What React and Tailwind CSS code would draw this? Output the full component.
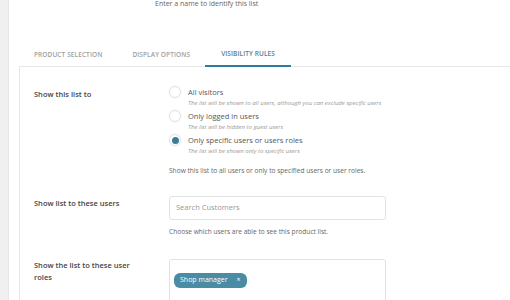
import React from "react";

function Radio({ checked, title, sub }) {
  return (
    <div className="flex items-start mb-[3px]">
      <div className="w-[12px] h-[12px] rounded-full border border-[#e3e3e3] bg-white shadow-[0_0_2px_rgba(0,0,0,0.08)] flex items-center justify-center mt-[-1px] shrink-0">
        {checked && <div className="w-[7px] h-[7px] rounded-full bg-[#3c7b97]" />}
      </div>
      <div className="ml-[7px] flex flex-col">
        <span className="text-[7.5px] leading-[11px] text-[#555]">{title}</span>
        <span className="text-[6px] leading-[10px] italic text-[#9a9a9a]">{sub}</span>
      </div>
    </div>
  );
}

export default function App() {
  return (
    <div
      className="w-[510px] h-[300px] overflow-hidden flex bg-white"
      style={{ fontFamily: '"Open Sans", "Noto Sans", sans-serif' }}
    >
      <div className="w-[9px] h-full bg-[#f0f0f0] border-r border-[#e6e6e6] shrink-0" />
      <div className="flex-1 flex flex-col pl-[10px] min-h-0">
        <div className="h-[40px] shrink-0 pl-[136px] text-[7px] leading-[7px] text-[#666]">
          Enter a name to identify this list
        </div>
        <div className="flex h-[27px] shrink-0 items-stretch">
          <div className="px-[15px] pt-[3px] flex items-center text-[6.5px] font-semibold tracking-[0.1px] text-[#a0a0a0]">PRODUCT SELECTION</div>
          <div className="px-[15px] pt-[3px] flex items-center text-[6.5px] font-semibold tracking-[0.1px] text-[#a0a0a0]">DISPLAY OPTIONS</div>
          <div className="px-[16px] pt-[3px] flex items-center text-[6.5px] font-semibold tracking-[0.1px] text-[#5d7b8e] border-b-[2px] border-[#2d7d9e] relative z-10">VISIBILITY RULES</div>
        </div>
        <div className="shrink-0 border-l border-t border-[#e6e6e6] mt-[-1px] pl-[14px] pt-[20px] pb-[20px]">
          <div className="flex">
            <div className="w-[135px] text-[7.5px] leading-[12px] font-semibold text-[#444] mt-[1px]">Show this list to</div>
            <div className="flex flex-col">
              <Radio title="All visitors" sub="The list will be shown to all users, although you can exclude specific users" />
              <Radio title="Only logged in users" sub="The list will be hidden to guest users" />
              <Radio checked title="Only specific users or users roles" sub="The list will be shown only to specific users" />
              <div className="mt-[7px] text-[6.6px] leading-[10px] text-[#666]">Show this list to all users or only to specified users or user roles.</div>
            </div>
          </div>
          <div className="flex mt-[20px]">
            <div className="w-[135px] text-[7.5px] leading-[12px] font-semibold text-[#444] pt-[1px]">Show list to these users</div>
            <div className="flex flex-col">
              <div className="w-[217px] h-[24px] rounded-[3px] border border-[#e2e2e2] flex items-center pl-[6px] text-[7.5px] text-[#999]">Search Customers</div>
              <div className="mt-[7px] text-[6.6px] leading-[10px] text-[#666]">Choose which users are able to see this product list.</div>
            </div>
          </div>
          <div className="flex mt-[22px]">
            <div className="w-[135px] pr-[30px] text-[7.5px] leading-[12px] font-semibold text-[#444]">Show the list to these user roles</div>
            <div className="w-[217px] h-[60px] rounded-[3px] border border-[#e2e2e2] pt-[4px] pl-[4px]">
              <div className="inline-flex items-center h-[15px] rounded-[6px] bg-[#4a8ca4] px-[6px] text-[7px] text-white">
                <span>Shop manager</span>
                <span className="ml-[9px] text-[7px]">×</span>
              </div>
            </div>
          </div>
        </div>
      </div>
    </div>
  );
}
